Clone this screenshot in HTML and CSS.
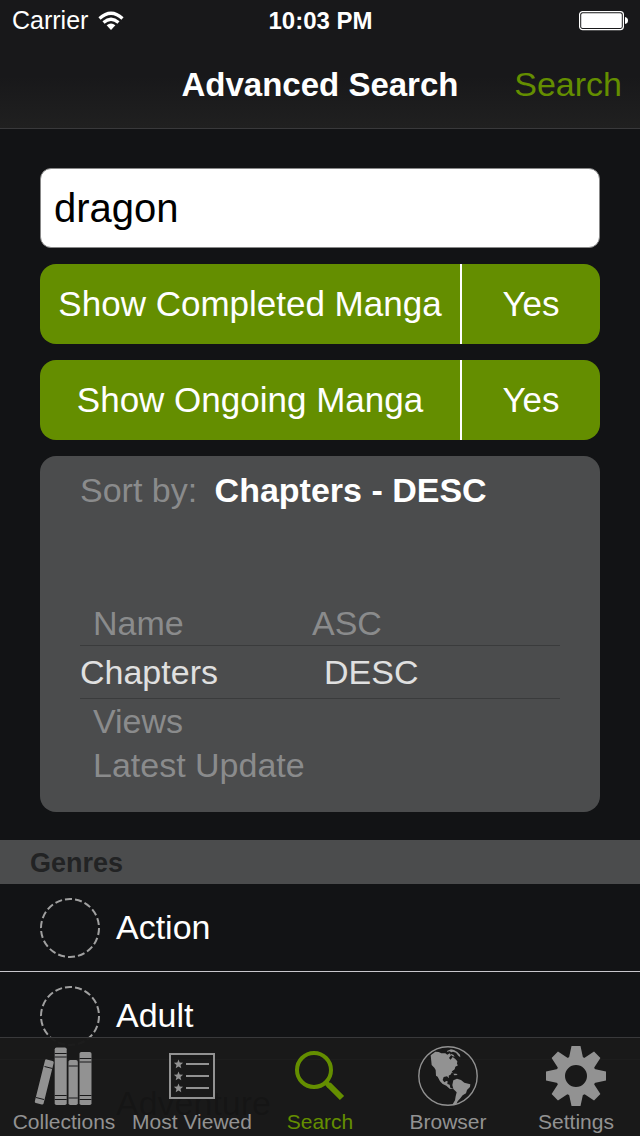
FILE: index.html
```html
<!DOCTYPE html>
<html lang="en">
<head>
  <meta charset="utf-8">
  <meta name="viewport" content="width=device-width, initial-scale=1">
  <title>Advanced Search</title>
  <link rel="stylesheet" href="styles.css">
</head>
<body>
  <form class="app">
    <header class="header">
      <div class="status">
        <span class="carrier">Carrier
          <svg class="wifi" viewBox="0 0 26 20" aria-hidden="true">
            <path d="M1.500 7.500Q13-3 24.500 7.500M5.500 11.500Q13 5 20.500 11.500" fill="none" stroke="currentColor" stroke-width="3.200"/>
            <path d="M8.600 14.300Q13 10.800 17.400 14.300L13 19z" fill="currentColor"/>
          </svg>
        </span>
        <strong class="clock">10:03 PM</strong>
        <svg class="battery" viewBox="0 0 50 20" aria-hidden="true">
          <rect x=".6" y=".6" width="43.800" height="18" rx="3" fill="none" stroke="currentColor" stroke-width="1.200"/>
          <rect x="2.200" y="2.200" width="40.600" height="14.800" rx="1.500" fill="currentColor"/>
          <path d="M46 6q3 .5 3 3.500t-3 3.500z" fill="currentColor"/>
        </svg>
      </div>
      <div class="nav">
        <h1 class="nav-title">Advanced Search</h1>
        <button class="nav-action" type="submit">Search</button>
      </div>
    </header>

    <main class="content">
      <div class="filters">
        <input class="keyword" type="text" value="dragon" aria-label="Manga title">
        <button class="toggle" type="button" aria-pressed="true">
          <span class="toggle-name">Show Completed Manga</span><span class="toggle-value">Yes</span>
        </button>
        <button class="toggle" type="button" aria-pressed="true">
          <span class="toggle-name">Show Ongoing Manga</span><span class="toggle-value">Yes</span>
        </button>
        <section class="sort">
          <p class="sort-current">Sort by: <strong class="sort-value">Chapters - DESC</strong></p>
          <div class="picker">
            <div class="wheel" role="radiogroup" aria-label="Sort field">
              <label class="option"><input class="option-input" type="radio" name="field">Name</label>
              <label class="option option-selected"><input class="option-input" type="radio" name="field" checked>Chapters</label>
              <label class="option"><input class="option-input" type="radio" name="field">Views</label>
              <label class="option"><input class="option-input" type="radio" name="field">Latest Update</label>
            </div>
            <div class="wheel wheel-order" role="radiogroup" aria-label="Sort order">
              <label class="option"><input class="option-input" type="radio" name="order">ASC</label>
              <label class="option option-selected"><input class="option-input" type="radio" name="order" checked>DESC</label>
            </div>
          </div>
        </section>
      </div>

      <h2 class="section-title">Genres</h2>
      <ul class="genres">
        <li class="genre">
          <label class="genre-label">
            <input class="genre-input" type="checkbox">
            <svg class="ring" viewBox="0 0 60 60" aria-hidden="true"><circle cx="30" cy="30" r="29" pathLength="180"/></svg>
            Action
          </label>
        </li>
        <li class="genre">
          <label class="genre-label">
            <input class="genre-input" type="checkbox">
            <svg class="ring" viewBox="0 0 60 60" aria-hidden="true"><circle cx="30" cy="30" r="29" pathLength="180"/></svg>
            Adult
          </label>
        </li>
        <li class="genre genre-beneath">
          <label class="genre-label">
            <input class="genre-input" type="checkbox">
            <svg class="ring" viewBox="0 0 60 60" aria-hidden="true"><circle cx="30" cy="30" r="29" pathLength="180"/></svg>
            Adventure
          </label>
        </li>
      </ul>
    </main>

    <nav class="tabs" aria-label="Main">
      <a class="tab" href="#collections">
        <svg class="tab-icon" viewBox="0 0 60 60" aria-hidden="true">
          <g fill="currentColor">
            <rect x="11" y="14" width="9" height="45" rx="1.500" transform="rotate(14 15 15)"/>
            <rect x="20.700" y="1.500" width="12" height="57.500" rx="1.800"/>
            <rect x="34.500" y="14" width="9.300" height="45" rx="1.800"/>
            <rect x="45.500" y="6" width="12" height="53" rx="1.800"/>
          </g>
          <path d="M20.700 7.500h12m-12 3.500h12m-12 38.500h12m-12 4h12M34.500 20h9.300m-9.300 32h9.300M45.500 12.500h12m-12 3.500h12m-12 33.500h12m-12 4h12M10.500 20.500l8 2M2 51.500l8 2" fill="none" stroke="#19191a" stroke-width="1"/>
        </svg>
        Collections
      </a>
      <a class="tab" href="#most-viewed">
        <svg class="tab-icon" viewBox="0 0 60 60" aria-hidden="true">
          <path d="M8 8h44v44H8zM24 18h23M24 30h23M24 42h23" fill="none" stroke="currentColor" stroke-width="2"/>
          <g fill="currentColor">
            <path id="star" d="M16.500 13.500l1.200 3.100 3.400.2-2.600 2.200.8 3.300-2.800-1.800-2.800 1.800.8-3.300-2.600-2.200 3.400-.2z"/>
            <use href="#star" y="12"/>
            <use href="#star" y="24"/>
          </g>
        </svg>
        Most Viewed
      </a>
      <a class="tab tab-active" href="#search" aria-current="page">
        <svg class="tab-icon" viewBox="0 0 60 60" aria-hidden="true">
          <g fill="none" stroke="currentColor">
            <circle cx="24" cy="24" r="17" stroke-width="4"/>
            <path d="M35.500 36L40 40.500" stroke-width="5"/>
            <path d="M38.500 38.500L52 52" stroke-width="6"/>
          </g>
        </svg>
        Search
      </a>
      <a class="tab" href="#browser">
        <svg class="tab-icon" viewBox="0 0 60 60" aria-hidden="true">
          <circle cx="30" cy="30" r="29.200" fill="none" stroke="currentColor" stroke-width="1.400"/>
          <g fill="currentColor" transform="scale(.3333) translate(-54 -48)">
            <path d="M92 76l14-11 10 1 8 4 12 0 6 4 7-4 4 6-6 8 5 5 6-8 8 6 6 7-1 8 3 4-8 4-2 8-8 6-3 9-7 4 1 8-6-6-10 2-3 9 5 7 6-4 4 1-1 8 7 2 2 9 10 4-12-1-10-9-11-5-8-8-7-14-5-3-1-17-4-7-8-8z"/>
            <path d="M141 63l12-5 9 2 10 6 8 8 1 8-6-5-7-9-9-3-5 2-5-3-8 1z"/>
            <path d="M151 71l9 3 4 6-8-2zM144 124l8-1 8 6-9-2zM160 131l9 0 4 4-10 1z"/>
            <path d="M160 151l11-5 12 4 10 8 18 5-1 8-9 9-3 10-10 6-7 9-8 9-4 9-12 1 8-13 2-12 3-12-10-10-3-12z"/>
          </g>
        </svg>
        Browser
      </a>
      <a class="tab" href="#settings">
        <svg class="tab-icon" viewBox="0 0 60 60" aria-hidden="true">
          <g fill="currentColor">
            <circle cx="30" cy="30" r="15.500" fill="none" stroke="currentColor" stroke-width="9"/>
            <path id="teeth" d="M22.500 14l3-14h9l3 14zM22.500 46l3 14h9l3-14z"/>
            <use href="#teeth" transform="rotate(45 30 30)"/>
            <use href="#teeth" transform="rotate(90 30 30)"/>
            <use href="#teeth" transform="rotate(135 30 30)"/>
          </g>
        </svg>
        Settings
      </a>
    </nav>
  </form>
</body>
</html>
```
FILE: styles.css
```css
:root {
  --green: #648e00;
  --line: #39393b;
  --grey: #929292;
}

* {
  box-sizing: border-box;
}

body {
  margin: 0;
  background: #121315;
  color: #fff;
  font-family: "Liberation Sans", Arial, sans-serif;
  font-size: 34px;
}

button,
input {
  font: inherit;
}

.app {
  display: flex;
  flex-direction: column;
  height: 100vh;
}

.header {
  flex: none;
  background: linear-gradient(#18181a 60%, #202020);
  border-bottom: 1px solid var(--line);
}

.status {
  display: grid;
  grid-template-columns: 1fr auto 1fr;
  align-items: center;
  height: 41px;
  padding: 0 11px 0 12px;
  font-size: 25px;
}

.carrier {
  display: flex;
  align-items: center;
  gap: 10px;
}

.wifi {
  width: 26px;
  height: 20px;
}

.clock {
  font-size: 24px;
}

.battery {
  width: 50px;
  height: 20px;
  justify-self: end;
}

.nav {
  display: grid;
  grid-template-columns: 1fr auto 1fr;
  align-items: center;
  height: 87px;
  padding: 0 18px;
}

.nav-title {
  grid-column: 2;
  margin: 0;
  font-size: 33px;
}

.nav-action {
  justify-self: end;
  padding: 0;
  border: 0;
  background: none;
  color: var(--green);
}

.content {
  flex: 1;
  min-height: 0;
  overflow-y: auto;
  scrollbar-width: none;
  margin-bottom: -99px;
}

.filters {
  display: flex;
  flex-direction: column;
  gap: 16px;
  padding: 39px 40px 28px;
}

.keyword {
  width: 100%;
  height: 80px;
  padding: 0 13px;
  border: 1px solid #888;
  border-radius: 11px;
  background: #fff;
  color: #000;
  font-size: 40px;
}

.toggle {
  display: grid;
  grid-template-columns: 3fr 1fr;
  height: 80px;
  padding: 0;
  border: 0;
  border-radius: 16px;
  background: var(--green);
  color: #fff;
  font-size: 35px;
  line-height: 80px;
}

.toggle-value {
  border-left: 2px solid #fff;
}

.sort {
  padding: 12px 40px 25px;
  border-radius: 16px;
  background: #4b4c4d;
  color: #8a8b8c;
}

.sort-current {
  margin: 0 0 89px;
  line-height: 44px;
}

.sort-value {
  margin-left: 8px;
  color: #fff;
}

.picker {
  display: grid;
  grid-template-columns: 232px 1fr;
}

.wheel {
  display: flex;
  flex-direction: column;
}

.option {
  padding-left: 13px;
  line-height: 44px;
  white-space: nowrap;
}

.wheel-order .option {
  padding-left: 0;
}

.option-selected,
.wheel-order .option-selected {
  padding-left: 0;
  border: solid #3a3b3c;
  border-width: 1px 0;
  color: #e0e0e0;
  line-height: 52px;
}

.wheel-order .option-selected {
  padding-left: 12px;
}

.option-input {
  position: absolute;
  opacity: 0;
}

.section-title {
  margin: 0;
  padding: 2px 30px 0;
  background: #4b4c4d;
  color: #222324;
  font-size: 27px;
  line-height: 42px;
}

.genres {
  margin: 0;
  padding: 0;
  list-style: none;
}

.genre {
  border-bottom: 1px solid #c8c7cc;
}

.genre-label {
  position: relative;
  display: flex;
  align-items: center;
  gap: 16px;
  height: 87px;
  padding: 0 40px;
}

.genre-input {
  position: absolute;
  width: 60px;
  height: 60px;
  margin: 0;
  opacity: 0;
}

.ring {
  width: 60px;
  height: 60px;
  fill: none;
  stroke: #a0a0a0;
  stroke-width: 2;
  stroke-dasharray: 7 3;
}

/* The row under the tab bar shows through it as a faint shadow. */
.genre-beneath .genre-label {
  z-index: 2;
  color: rgb(0 0 0 / 14%);
  pointer-events: none;
}

.genre-beneath .ring {
  visibility: hidden;
}

.tabs {
  position: relative;
  flex: none;
  display: grid;
  grid-template-columns: repeat(5, 1fr);
  height: 99px;
  padding-top: 8px;
  border-top: 1px solid var(--line);
  background: rgb(25 25 26 / 98%);
}

.tab {
  position: relative;
  z-index: 3;
  display: flex;
  flex-direction: column;
  align-items: center;
  gap: 4px;
  color: var(--grey);
  font-size: 21px;
  line-height: 24px;
  text-decoration: none;
  white-space: nowrap;
}

.tab-icon {
  width: 60px;
  height: 60px;
}

.tab-active {
  color: var(--green);
}
```
